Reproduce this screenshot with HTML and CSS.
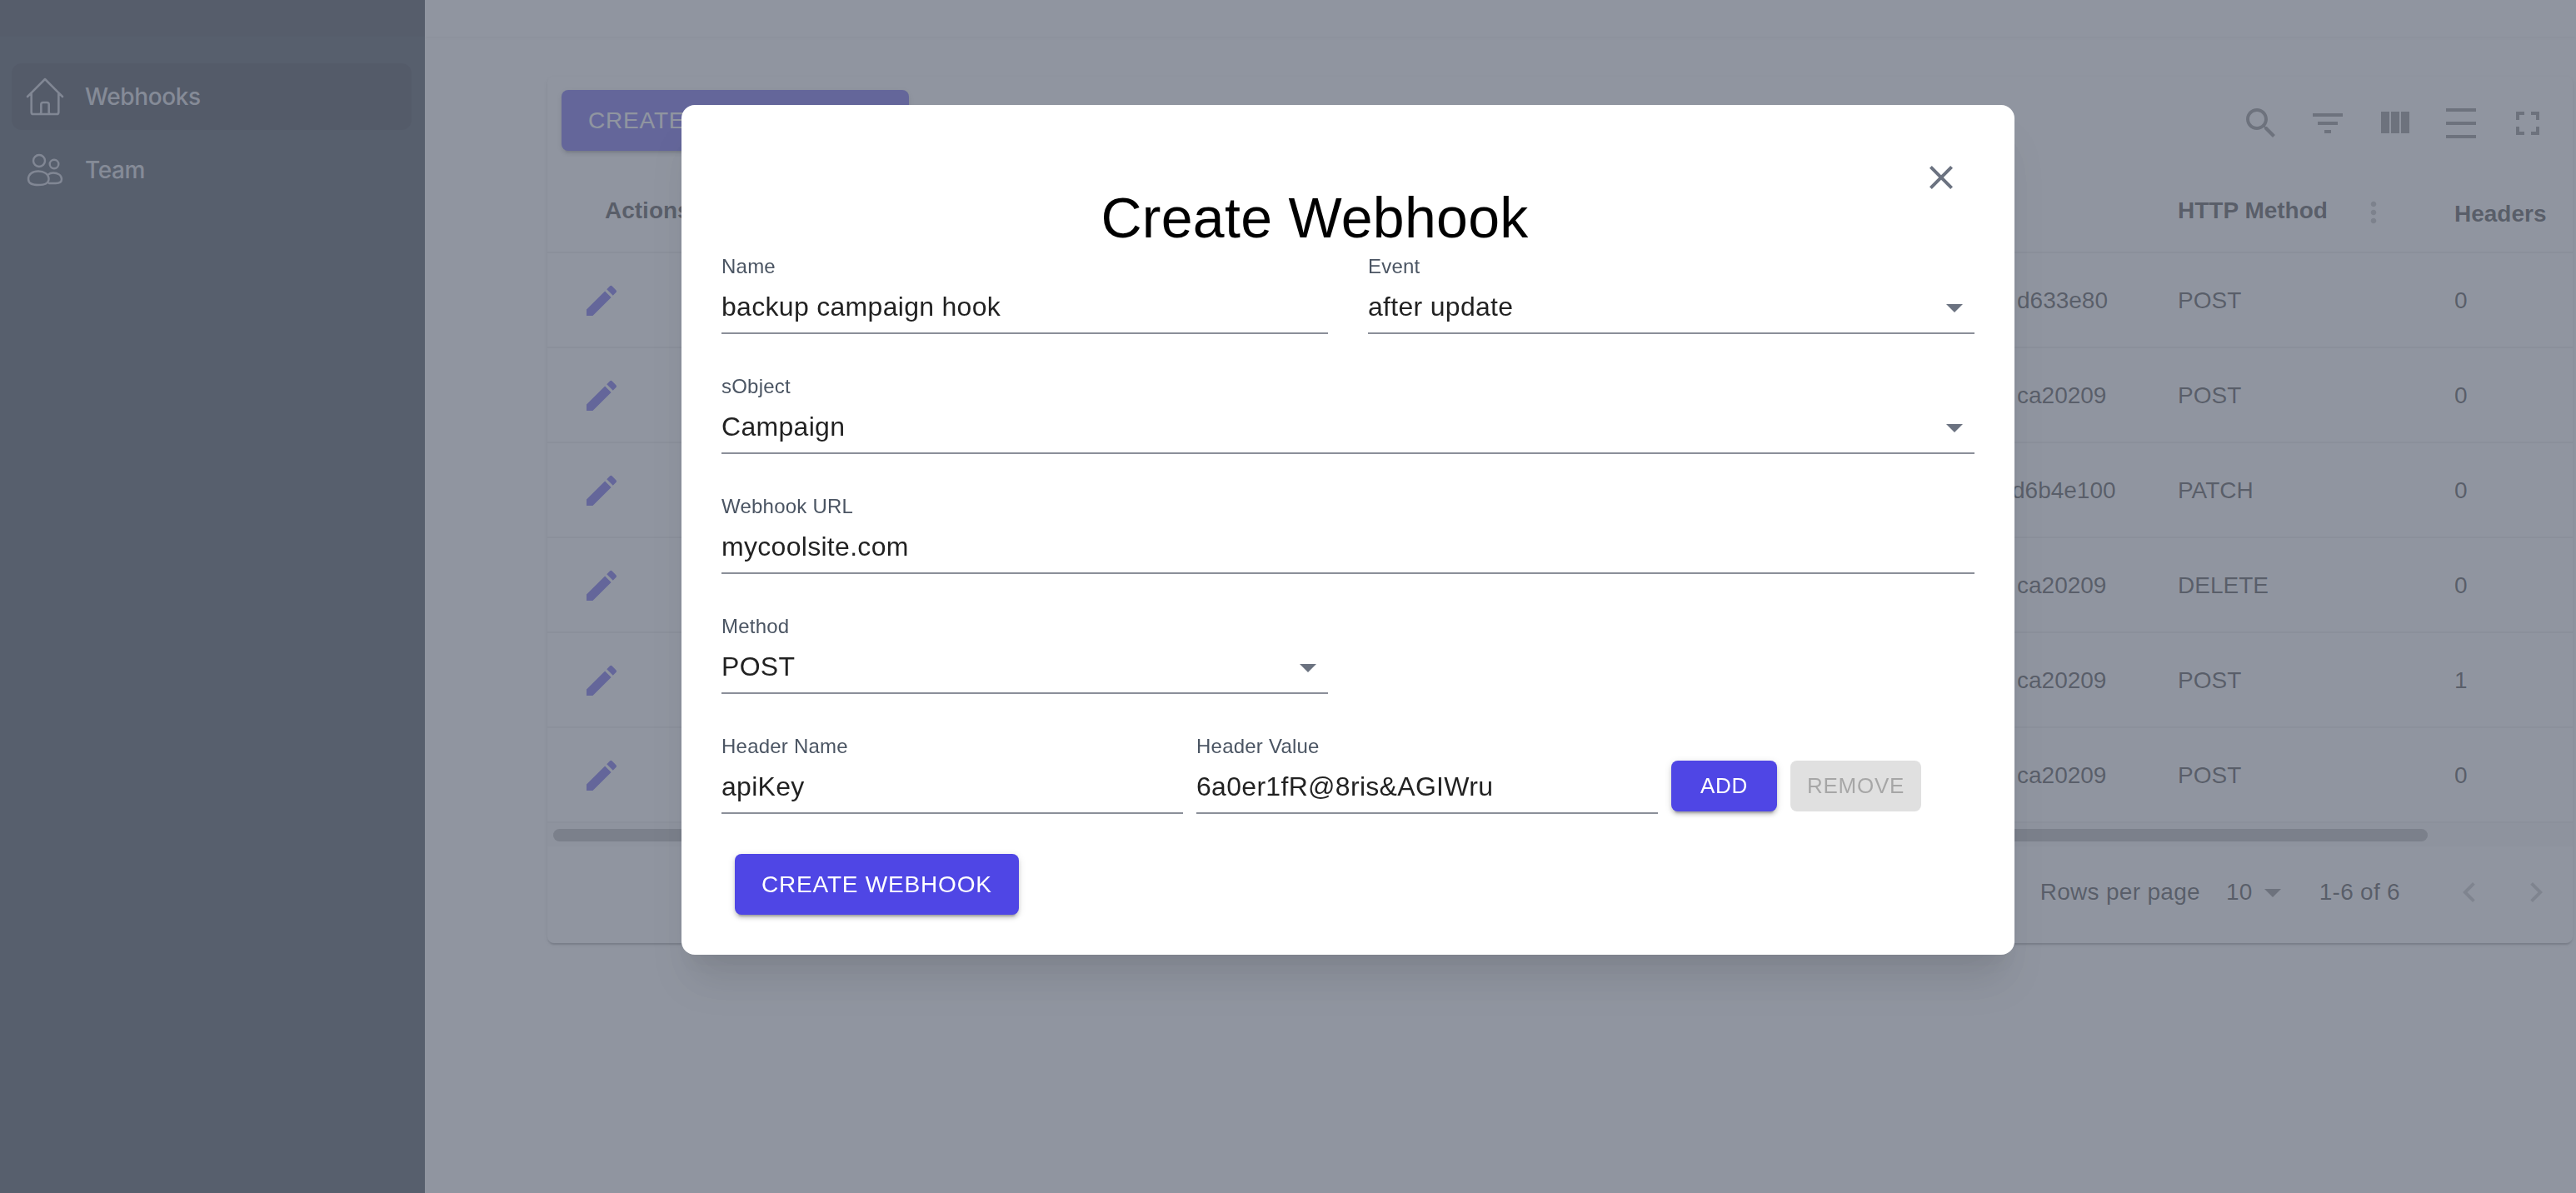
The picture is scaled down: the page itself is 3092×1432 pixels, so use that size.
FILE: index.html
```html
<!DOCTYPE html>
<html lang="en">
<head>
<meta charset="utf-8">
<title>Create Webhook</title>
<link rel="stylesheet" href="styles.css">
</head>
<body>
<div class="app">
  <aside class="sidebar">
    <div class="sidebar-top"></div>
    <nav class="nav">
      <a class="nav-item nav-item-active">
        <svg class="nav-icon" viewBox="0 0 24 24"><path d="M3 12l2-2m0 0l7-7 7 7M5 10v10a1 1 0 001 1h3m10-11l2 2m-2-2v10a1 1 0 01-1 1h-3m-6 0a1 1 0 001-1v-4a1 1 0 011-1h2a1 1 0 011 1v4a1 1 0 001 1m-6 0h6"/></svg>
        <span>Webhooks</span>
      </a>
      <a class="nav-item">
        <svg class="nav-icon nav-icon-team" viewBox="0 0 56 56"><circle cx="21" cy="17" r="7"/><circle cx="39" cy="21" r="5.300"/><path d="M8 39C8 33 13 29.500 20 29.500S32 33 32.500 38C33 44 28 46 20 46S8 44 8 39z"/><path d="M32 33.500C33.500 32 35.500 31.500 38 31.500C43 31.500 48 34 48 39C48 42.500 45 44 41 44H33"/></svg>
        <span>Team</span>
      </a>
    </nav>
  </aside>
  <main class="main">
    <header class="topbar"></header>
    <section class="content">
      <div class="paper">
        <div class="toolbar">
          <button class="btn btn-primary btn-large">CREATE NEW WEBHOOK</button>
          <div class="tools">
            <span class="tool"><svg viewBox="0 0 24 24"><path d="M15.500 14h-.79l-.28-.27C15.410 12.590 16 11.110 16 9.500 16 5.910 13.090 3 9.500 3S3 5.910 3 9.500 5.910 16 9.500 16c1.610 0 3.090-.59 4.230-1.570l.27.28v.79l5 4.990L20.490 19l-4.990-5zm-6 0C7.010 14 5 11.990 5 9.500S7.010 5 9.500 5 14 7.010 14 9.500 11.990 14 9.500 14z"/></svg></span>
            <span class="tool"><svg viewBox="0 0 24 24"><path d="M10 18h4v-2h-4v2zM3 6v2h18V6H3zm3 7h12v-2H6v2z"/></svg></span>
            <span class="tool"><svg viewBox="0 0 24 24"><path d="M10 18h5V5h-5v13zm-6 0h5V5H4v13zM16 5v13h5V5h-5z"/></svg></span>
            <span class="tool"><svg viewBox="0 0 24 24"><path d="M3 19h18v2H3zm0-8h18v2H3zm0-8h18v2H3z"/></svg></span>
            <span class="tool"><svg viewBox="0 0 24 24"><path d="M7 14H5v5h5v-2H7v-3zm-2-4h2V7h3V5H5v5zm12 7h-3v2h5v-5h-2v3zM14 5v2h3v3h2V5h-5z"/></svg></span>
          </div>
        </div>
        <div class="table">
          <div class="row row-head">
            <div class="cell-actions-head"><span class="head-lift">Actions</span></div>
            <div></div>
            <div class="cell cell-method-head"><span class="head-lift">HTTP Method</span><svg class="more" viewBox="0 0 24 24"><path d="M12 8c1.100 0 2-.9 2-2s-.9-2-2-2-2 .9-2 2 .9 2 2 2zm0 2c-1.100 0-2 .9-2 2s.9 2 2 2 2-.9 2-2-.9-2-2-2zm0 6c-1.100 0-2 .9-2 2s.9 2 2 2 2-.9 2-2-.9-2-2-2z"/></svg></div>
            <div class="cell">Headers</div>
          </div>
          <div class="row">
            <div class="cell-edit"><svg class="edit" viewBox="0 0 24 24"><path d="M3 17.250V21h3.750L17.810 9.940l-3.750-3.750L3 17.250zM20.710 7.040c.39-.39.39-1.020 0-1.410l-2.340-2.340a.9959.9959 0 00-1.410 0l-1.830 1.830 3.750 3.750 1.830-1.830z"/></svg></div>
            <div class="cell-url">d633e80</div><div class="cell">POST</div><div class="cell">0</div>
          </div>
          <div class="row">
            <div class="cell-edit"><svg class="edit" viewBox="0 0 24 24"><path d="M3 17.250V21h3.750L17.810 9.940l-3.750-3.750L3 17.250zM20.710 7.040c.39-.39.39-1.020 0-1.410l-2.340-2.340a.9959.9959 0 00-1.410 0l-1.830 1.830 3.750 3.750 1.830-1.830z"/></svg></div>
            <div class="cell-url">ca20209</div><div class="cell">POST</div><div class="cell">0</div>
          </div>
          <div class="row">
            <div class="cell-edit"><svg class="edit" viewBox="0 0 24 24"><path d="M3 17.250V21h3.750L17.810 9.940l-3.750-3.750L3 17.250zM20.710 7.040c.39-.39.39-1.020 0-1.410l-2.340-2.340a.9959.9959 0 00-1.410 0l-1.830 1.830 3.750 3.750 1.830-1.830z"/></svg></div>
            <div class="cell-url cell-url-long">d6b4e100</div><div class="cell">PATCH</div><div class="cell">0</div>
          </div>
          <div class="row">
            <div class="cell-edit"><svg class="edit" viewBox="0 0 24 24"><path d="M3 17.250V21h3.750L17.810 9.940l-3.750-3.750L3 17.250zM20.710 7.040c.39-.39.39-1.020 0-1.410l-2.340-2.340a.9959.9959 0 00-1.410 0l-1.830 1.830 3.750 3.750 1.830-1.830z"/></svg></div>
            <div class="cell-url">ca20209</div><div class="cell">DELETE</div><div class="cell">0</div>
          </div>
          <div class="row">
            <div class="cell-edit"><svg class="edit" viewBox="0 0 24 24"><path d="M3 17.250V21h3.750L17.810 9.940l-3.750-3.750L3 17.250zM20.710 7.040c.39-.39.39-1.020 0-1.410l-2.340-2.340a.9959.9959 0 00-1.410 0l-1.830 1.830 3.750 3.750 1.830-1.830z"/></svg></div>
            <div class="cell-url">ca20209</div><div class="cell">POST</div><div class="cell">1</div>
          </div>
          <div class="row">
            <div class="cell-edit"><svg class="edit" viewBox="0 0 24 24"><path d="M3 17.250V21h3.750L17.810 9.940l-3.750-3.750L3 17.250zM20.710 7.040c.39-.39.39-1.020 0-1.410l-2.340-2.340a.9959.9959 0 00-1.410 0l-1.830 1.830 3.750 3.750 1.830-1.830z"/></svg></div>
            <div class="cell-url">ca20209</div><div class="cell">POST</div><div class="cell">0</div>
          </div>
        </div>
        <div class="scrollbar"><div class="scroll-thumb"></div></div>
        <div class="pager">
          <span class="pager-label">Rows per page</span>
          <span class="pager-size">10</span>
          <svg class="pager-arrow" viewBox="0 0 24 24"><path d="M7 10l5 5 5-5z"/></svg>
          <span class="pager-range">1-6 of 6</span>
          <span class="pager-btn"><svg viewBox="0 0 24 24"><path d="M15.410 7.410L14 6l-6 6 6 6 1.410-1.410L10.830 12z"/></svg></span>
          <span class="pager-btn"><svg viewBox="0 0 24 24"><path d="M10 6L8.590 7.410 13.170 12l-4.580 4.590L10 18l6-6z"/></svg></span>
        </div>
      </div>
    </section>
  </main>
</div>

<div class="overlay">
  <div class="modal">
    <div class="modal-head">
      <h1 class="modal-title">Create Webhook</h1>
      <span class="modal-close"><svg viewBox="0 0 24 24"><path d="M19 6.410L17.590 5 12 10.590 6.410 5 5 6.410 10.590 12 5 17.590 6.410 19 12 13.410 17.590 19 19 17.590 13.410 12z"/></svg></span>
    </div>
    <div class="form">
      <div class="field">
        <div class="field-label">Name</div>
        <div class="control">backup campaign hook</div>
      </div>
      <div class="field">
        <div class="field-label">Event</div>
        <div class="control">after update<svg class="caret" viewBox="0 0 24 24"><path d="M7 10l5 5 5-5z"/></svg></div>
      </div>
      <div class="field field-wide">
        <div class="field-label">sObject</div>
        <div class="control">Campaign<svg class="caret" viewBox="0 0 24 24"><path d="M7 10l5 5 5-5z"/></svg></div>
      </div>
      <div class="field field-wide">
        <div class="field-label">Webhook URL</div>
        <div class="control">mycoolsite.com</div>
      </div>
      <div class="field field-first">
        <div class="field-label">Method</div>
        <div class="control">POST<svg class="caret" viewBox="0 0 24 24"><path d="M7 10l5 5 5-5z"/></svg></div>
      </div>
      <div class="header-row">
        <div class="field field-header">
          <div class="field-label">Header Name</div>
          <div class="control">apiKey</div>
        </div>
        <div class="field field-header">
          <div class="field-label">Header Value</div>
          <div class="control">6a0er1fR@8ris&amp;AGIWru</div>
        </div>
        <button class="btn btn-primary btn-small btn-add">ADD</button>
        <button class="btn btn-disabled btn-small">REMOVE</button>
      </div>
    </div>
    <button class="btn btn-primary btn-large btn-submit">CREATE WEBHOOK</button>
  </div>
</div>
</body>
</html>
```
FILE: styles.css
```css
* { box-sizing: border-box; }
html, body { margin: 0; height: 100%; }
body {
  font-family: "Liberation Sans", Arial, sans-serif;
  color: rgba(0, 0, 0, 0.87);
  background: #fff;
  overflow: hidden;
}
svg { display: block; fill: currentColor; }

.app { display: flex; height: 1432px; }

.sidebar {
  flex: 0 0 510px;
  background: #1f2937;
  font-family: Inter, "Liberation Sans", sans-serif;
}
.sidebar-top { height: 44px; background: #19222f; }
.nav { padding: 32px 16px 0 14px; display: flex; flex-direction: column; gap: 8px; }
.nav-item {
  display: flex;
  align-items: center;
  gap: 20px;
  height: 80px;
  padding-left: 12px;
  border-radius: 12px;
  color: #d1d5db;
  font-size: 28px;
  font-weight: 500;
  letter-spacing: -0.4px;
}
.nav-item-active { background: #111827; }
.nav-icon {
  width: 56px;
  height: 56px;
  flex: none;
  fill: none;
  stroke: #c4c8cf;
  stroke-width: 1.1;
  stroke-linecap: round;
  stroke-linejoin: round;
}
.nav-icon-team { stroke-width: 2.4; }

.main { flex: 1; min-width: 0; display: flex; flex-direction: column; }
.topbar { height: 44px; background: #fff; box-shadow: 0 2px 4px rgba(0, 0, 0, 0.06); }
.content { padding: 48px 4px 0 147px; }

.paper {
  height: 1040px;
  background: #fff;
  border-radius: 8px;
  overflow: hidden;
  box-shadow: 0 4px 2px -2px rgba(0, 0, 0, 0.2), 0 2px 2px 0 rgba(0, 0, 0, 0.14), 0 2px 6px 0 rgba(0, 0, 0, 0.12);
}
.toolbar {
  height: 120px;
  padding: 16px 14px 0 17px;
  display: flex;
  justify-content: space-between;
  align-items: flex-start;
}
.tools { display: flex; color: rgba(0, 0, 0, 0.54); }
.tool { width: 80px; height: 80px; display: flex; align-items: center; justify-content: center; }
.tool svg { width: 48px; height: 48px; }

.btn {
  font-family: "Liberation Sans", Arial, sans-serif;
  border: 0;
  border-radius: 8px;
  letter-spacing: 0.02857em;
  white-space: nowrap;
}
.btn-primary {
  background: #4f46e5;
  color: #fff;
  box-shadow: 0 6px 2px -4px rgba(0, 0, 0, 0.2), 0 4px 4px 0 rgba(0, 0, 0, 0.14), 0 2px 10px 0 rgba(0, 0, 0, 0.12);
}
.btn-large { height: 73px; padding: 0 32px; font-size: 28px; }
.btn-small { height: 61px; padding: 0 20px; font-size: 26px; min-width: 127px; }
.btn-disabled { background: #e0e0e0; color: rgba(0, 0, 0, 0.26); }

.table { font-size: 28px; }
.row {
  display: grid;
  grid-template-columns: 1764px 161px 332px 174px;
  height: 114px;
  padding-top: 2px;
  align-items: center;
  border-bottom: 2px solid #e9e9ea;
}
.row-head { height: 92px; padding-top: 0; font-weight: 700; }
.cell { padding-left: 32px; }
.cell-actions-head { padding-left: 69px; }
.cell-edit { padding-left: 41px; color: #4f46e5; }
.cell-url-long { margin-left: -6px; }
.edit { width: 48px; height: 48px; }
.cell-method-head { display: flex; align-items: center; }
.head-lift { margin-bottom: 8px; display: block; }
.more { width: 40px; height: 40px; margin: 0 0 5px 35px; color: rgba(0, 0, 0, 0.3); }

.scrollbar { height: 28px; padding-top: 7px; background: #f5f5f5; }
.scroll-thumb { width: 2250px; height: 15px; margin-left: 7px; border-radius: 8px; background: #aaa; }

.pager {
  display: flex;
  justify-content: flex-end;
  align-items: center;
  padding: 0 4px 6px 0;
  height: 115px;
  font-size: 28px;
  letter-spacing: 0.01071em;
}
.pager-size { margin-left: 31px; }
.pager-arrow { width: 48px; height: 48px; color: rgba(0, 0, 0, 0.54); }
.pager-range { margin: 0 43px 0 32px; }
.pager-btn { width: 80px; height: 80px; display: flex; align-items: center; justify-content: center; color: rgba(0, 0, 0, 0.26); }
.pager-btn svg { width: 48px; height: 48px; }

.overlay { position: fixed; inset: 0; background: rgba(107, 114, 128, 0.75); }
.modal {
  position: absolute;
  left: 818px;
  top: 126px;
  width: 1600px;
  padding: 47px 48px 48px;
  background: #fff;
  border-radius: 16px;
  box-shadow: 0 40px 50px -10px rgba(0, 0, 0, 0.1), 0 20px 20px -10px rgba(0, 0, 0, 0.04);
}
.modal-head { display: flex; align-items: flex-start; height: 128px; }
.modal-title {
  flex: 1;
  margin: 49px 0 0;
  font-size: 68px;
  font-weight: 400;
  line-height: 79px;
  letter-spacing: 0.3px;
  text-align: center;
  color: #000;
}
.modal-close { width: 80px; height: 80px; display: flex; align-items: center; justify-content: center; color: #6b7280; }
.modal-close svg { width: 48px; height: 48px; }

.form {
  margin-top: 7px;
  display: grid;
  grid-template-columns: 728px 728px;
  gap: 51px 48px;
}
.field-wide, .header-row { grid-column: 1 / span 2; }
.field-first { grid-column: 1; }
.field-label {
  height: 24px;
  margin-bottom: 12px;
  font-size: 24px;
  line-height: 24px;
  letter-spacing: 0.00938em;
  color: #4b5563;
}
.control {
  display: flex;
  justify-content: space-between;
  align-items: center;
  height: 57px;
  padding-bottom: 7px;
  border-bottom: 2px solid #8b8f99;
  font-size: 32px;
  line-height: 46px;
  letter-spacing: 0.00938em;
}
.caret { width: 48px; height: 48px; flex: none; margin-top: 2px; color: #6b7280; }
.header-row { display: flex; align-items: flex-end; gap: 16px; }
.field-header { flex: 0 0 554px; }
.header-row .btn { margin-bottom: 3px; }
.btn-submit { display: block; margin: 48px 0 0 16px; }
```
